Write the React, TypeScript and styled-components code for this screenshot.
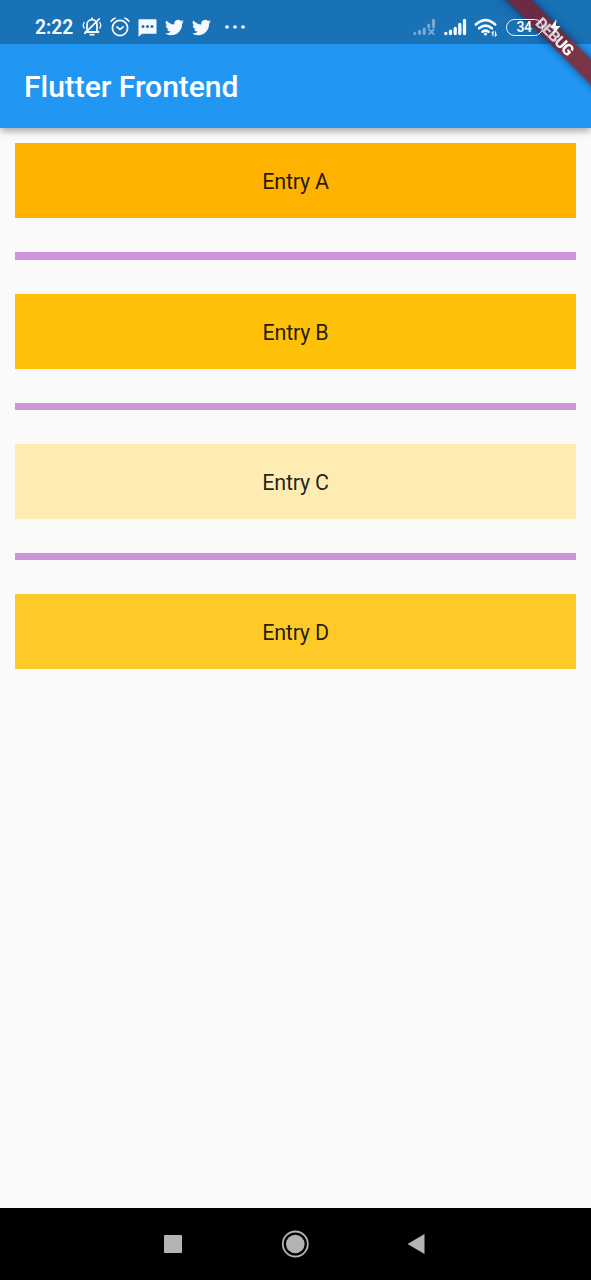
import React from "react";
import styled, { createGlobalStyle } from "styled-components";

const GlobalStyle = createGlobalStyle`
  * { box-sizing: border-box; }
  body { margin: 0; background: #fafafa; font-family: Roboto, sans-serif; }
`;

const Screen = styled.div`
  position: relative;
  display: flex;
  flex-direction: column;
  height: 1280px;
  overflow: hidden;
  background: #fafafa;
`;

const Header = styled.header`
  background: #2196f3;
  box-shadow: 0 3px 6px -1.5px rgba(0, 0, 0, 0.2), 0 4px 7px rgba(0, 0, 0, 0.12),
    0 1.5px 12px rgba(0, 0, 0, 0.08);
`;

const StatusBar = styled.div`
  position: relative;
  z-index: 2;
  display: flex;
  justify-content: space-between;
  height: 43.6px;
  padding: 11px 30px 0 35px;
  color: #f4faff;
  background: linear-gradient(to left, transparent 100px, #1971b6 100px);
`;

const StatusGroup = styled.div<{ $gap: number }>`
  display: flex;
  align-items: center;
  height: 32px;
  gap: ${(p) => p.$gap}px;
  svg { display: block; flex: none; }
`;

const StatusRight = styled(StatusGroup)`
  margin-right: -4px;
`;

const Clock = styled.span`
  width: 39px;
  padding-top: 1px;
  font-size: 19.3px;
  font-weight: 600;
  line-height: 34px;
  white-space: nowrap;
`;

const Battery = styled.span`
  width: 37px;
  height: 17px;
  border: 1.9px solid #f4faff;
  border-radius: 9px;
  font-size: 14px;
  font-weight: 600;
  letter-spacing: -0.6px;
  line-height: 15px;
  text-align: center;
`;

const Title = styled.h1`
  margin: 0;
  height: 84.4px;
  padding-left: 24px;
  color: #fff;
  font-size: 30.1px;
  font-weight: 500;
  letter-spacing: -0.06px;
  line-height: 86px;
`;

const RibbonClip = styled.div`
  position: absolute;
  z-index: 1;
  top: 0;
  right: 0;
  width: 100px;
  height: 128px;
  overflow: hidden;
`;

const Scrim = styled.div`
  height: 43.6px;
  background: #1971b6;
`;

const Ribbon = styled.div`
  position: absolute;
  top: 27.2px;
  right: -63.8px;
  width: 200px;
  height: 18px;
  transform: rotate(45deg);
  background: linear-gradient(to right, #6c2b45 108px, #7c3449 118px);
  box-shadow: 0 0 9px rgba(0, 0, 0, 0.5);
`;

const RibbonText = styled.div`
  font-size: 15.8px;
  font-weight: 900;
  letter-spacing: -0.9px;
  line-height: 19px;
  text-align: center;
  color: transparent;
  background: linear-gradient(to right, #d3ccd3 100px, #fff 113px);
  background-clip: text;
  -webkit-background-clip: text;
`;

const List = styled.main`
  flex: 1;
  padding: 15.2px 15px;
`;

const Entry = styled.div<{ $color: string }>`
  height: 75.2px;
  background: ${(p) => p.$color};
  color: rgba(0, 0, 0, 0.87);
  font-size: 21.5px;
  letter-spacing: -0.25px;
  line-height: 77px;
  text-align: center;
`;

const Divider = styled.hr`
  height: 7.5px;
  margin: 33.85px 0;
  border: 0;
  background: #ce93d8;
`;

const NavBar = styled.nav`
  display: flex;
  align-items: center;
  justify-content: space-between;
  height: 71.6px;
  padding: 0 166px 0 163px;
  background: #000;
  svg { display: block; }
`;

const BellOff = () => (
  <svg width="20" height="22" viewBox="0 0 20 22" fill="none" stroke="currentColor" strokeWidth="1.6" strokeLinecap="round">
    <path d="M3.5 16h13M5 15.8V8.7a5 5 0 0 1 10 0v7.1M10 3.5V2.2M17.3 2.8 2.8 17.3" strokeWidth="1.8" />
    <path d="M8.3 18.7h3.4" strokeWidth="1.8" />
    <path d="M2.2 6.5c-1.2 2-1.2 4 0 5.5M17.8 6.5c1.2 2 1.2 4 0 5.5" strokeWidth="1.3" />
  </svg>
);

const Alarm = () => (
  <svg width="20" height="22" viewBox="0 0 20 22" fill="none" stroke="currentColor" strokeWidth="1.7" strokeLinecap="round">
    <circle cx="10" cy="12" r="7.6" />
    <path d="M1.2 5.2Q2.5 3 5 2.2M18.8 5.2Q17.5 3 15 2.2M7 11l3 2.5 3.2-2.7" />
  </svg>
);

const Message = () => (
  <svg width="19" height="22" viewBox="0 0 19 22">
    <path fill="currentColor" d="M1.2 3.3h16.6a.7.7 0 0 1 .7.7v13a.7.7 0 0 1-.7.7H4.2L.5 20.8V4a.7.7 0 0 1 .7-.7z" />
    <g fill="#1971b6"><circle cx="5" cy="10.5" r="1.5" /><circle cx="9.5" cy="10.5" r="1.5" /><circle cx="14" cy="10.5" r="1.5" /></g>
  </svg>
);

const Bird = () => (
  <svg width="19" height="19" viewBox="0 0 24 24" fill="currentColor">
    <path d="M23.95 4.57a10 10 0 0 1-2.82.77 4.96 4.96 0 0 0 2.16-2.72c-.95.55-2 .95-3.13 1.19a4.92 4.92 0 0 0-8.38 4.48C7.69 8.09 4.07 6.13 1.64 3.16a4.92 4.92 0 0 0 1.52 6.57 4.9 4.9 0 0 1-2.23-.61v.06a4.92 4.92 0 0 0 3.95 4.83 5 5 0 0 1-2.21.08 4.94 4.94 0 0 0 4.6 3.42A9.87 9.87 0 0 1 0 19.54a14 14 0 0 0 7.55 2.21c9.05 0 14-7.5 14-13.98 0-.21 0-.42-.02-.63a9.94 9.94 0 0 0 2.42-2.57z" />
  </svg>
);

const MoreIcon = styled.svg`
  margin-left: 6px;
`;

const More = () => (
  <MoreIcon width="20" height="6" viewBox="0 0 20 6" fill="currentColor">
    <circle cx="2" cy="3" r="1.8" /><circle cx="10" cy="3" r="1.8" /><circle cx="18" cy="3" r="1.8" />
  </MoreIcon>
);

const NoSignal = () => (
  <svg width="23" height="18" viewBox="0 0 23 18" fill="none" stroke="currentColor" strokeWidth="3.1" strokeLinecap="round" opacity=".42">
    <path d="M1.8 15.5v-.2M6.5 15.5v-2.3M11.2 15.5v-4.7M15.8 8.7V7M20.5 8.7V2.3" />
    <path d="m16 11.5 4.7 4.7m0-4.7L16 16.2" strokeWidth="1.8" />
  </svg>
);

const Signal = () => (
  <svg width="23" height="18" viewBox="0 0 23 18" fill="none" stroke="currentColor" strokeWidth="3.3" strokeLinecap="round">
    <path d="M1.8 15.5v-.2M6.5 15.5v-2.3M11.2 15.5v-5M15.8 15.5V6.5M20.5 15.5V2.3" />
  </svg>
);

const Wifi = () => (
  <svg width="24" height="19" viewBox="0 0 24 19" fill="none" stroke="currentColor" strokeWidth="2.6" strokeLinecap="round">
    <path d="M1.8 6.5Q11.5-2.1 21.2 6.5M5.2 10.3q6.3-5.5 12.6 0M8.5 13.7q3-2.3 6 0" />
    <circle cx="11.5" cy="16" r="1.6" fill="currentColor" stroke="none" />
    <path d="M19 17.7v-3.9l-1 1.1M21.5 13.8v3.9l1-1.1" strokeWidth="1.2" />
  </svg>
);

const Bolt = () => (
  <svg width="15" height="18" viewBox="3 0 15 18" fill="currentColor">
    <path d="M9.5 1 3.2 10h4.3L5.5 17 13.5 8H8.8z" />
  </svg>
);

const entries = [
  { name: "A", color: "#ffb300" },
  { name: "B", color: "#ffc107" },
  { name: "C", color: "#ffecb3" },
  { name: "D", color: "#ffca28" },
];

export default function App() {
  return (
    <Screen>
      <GlobalStyle />
      <Header>
        <StatusBar>
          <StatusGroup $gap={8}>
            <Clock>2:22</Clock>
            <BellOff />
            <Alarm />
            <Message />
            <Bird />
            <Bird />
            <More />
          </StatusGroup>
          <StatusRight $gap={7.5}>
            <NoSignal />
            <Signal />
            <Wifi />
            <Battery>34</Battery>
            <Bolt />
          </StatusRight>
        </StatusBar>
        <Title>Flutter Frontend</Title>
      </Header>
      <RibbonClip>
        <Scrim />
        <Ribbon>
          <RibbonText>DEBUG</RibbonText>
        </Ribbon>
      </RibbonClip>
      <List>
        {entries.map((entry, i) => (
          <React.Fragment key={entry.name}>
            {i > 0 && <Divider />}
            <Entry $color={entry.color}>Entry {entry.name}</Entry>
          </React.Fragment>
        ))}
      </List>
      <NavBar>
        <svg width="20" height="20" viewBox="0 0 20 20">
          <rect x="1" y="1" width="18" height="18" rx=".7" fill="#b3b3b3" />
        </svg>
        <svg width="28" height="28" viewBox="0 0 28 28">
          <circle cx="14.3" cy="14" r="12.5" fill="none" stroke="#b3b3b3" strokeWidth="1.8" />
          <circle cx="14.3" cy="14" r="9.3" fill="#b3b3b3" />
        </svg>
        <svg width="19" height="22" viewBox="0 0 19 22">
          <path d="M18.5 1v20L1.5 11z" fill="#b3b3b3" />
        </svg>
      </NavBar>
    </Screen>
  );
}
